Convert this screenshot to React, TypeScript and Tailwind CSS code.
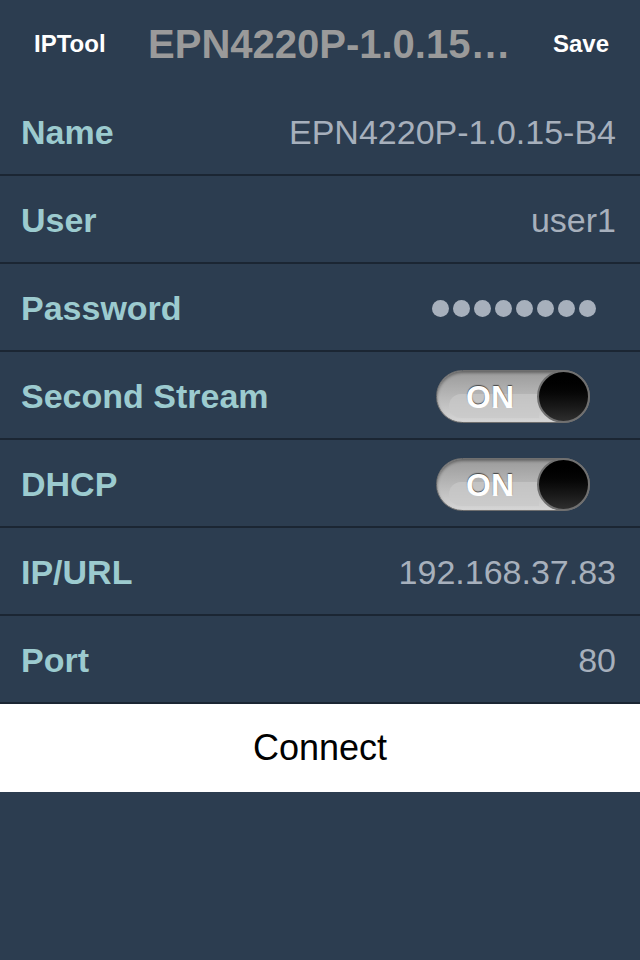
import React from "react";

const font = { fontFamily: '"Liberation Sans", Arial, Helvetica, sans-serif' };

function Toggle() {
  return (
    <div className="relative h-[53px] w-[154px] rounded-full border border-[#6f6f6f] bg-gradient-to-b from-[#9a9a9a] to-[#d6d6d6] shadow-[inset_0_2px_3px_rgba(0,0,0,0.35)]">
      <div className="absolute left-[12px] right-[50px] bottom-[4px] h-[24px] rounded-l-full bg-[#c9c9c9] opacity-70" />
      <span
        className="absolute left-[29px] top-[9px] text-[32px] font-bold leading-[34px] text-white [text-shadow:0_-1px_1px_rgba(0,0,0,0.6)]"
        style={font}
      >
        ON
      </span>
      <div className="absolute right-[-1px] top-[-1px] h-[53px] w-[53px] rounded-full border-2 border-[#707070] bg-gradient-to-b from-[#000000] to-[#2e2e2e]" />
    </div>
  );
}

function Row({ label, children }: { label: string; children: React.ReactNode }) {
  return (
    <div className="flex h-[88px] items-center justify-between border-b-2 border-[#1b2633] pl-[21px] pr-[24px] pt-[3px]">
      <span className="text-[34px] font-bold text-[#9ccbcf]" style={font}>
        {label}
      </span>
      {children}
    </div>
  );
}

function Value({ children }: { children: React.ReactNode }) {
  return (
    <span className="text-[34px] text-[#a7b0bc]" style={font}>
      {children}
    </span>
  );
}

export default function App() {
  return (
    <div className="h-[960px] w-[640px] overflow-hidden bg-[#2c3d50]" style={font}>
      <div className="flex h-[88px] items-center justify-between pl-[34px] pr-[31px]">
        <span className="text-[24px] font-bold text-white">IPTool</span>
        <span className="text-[40px] font-bold text-[#9a9a9a]">EPN4220P-1.0.15…</span>
        <span className="text-[24px] font-bold text-white">Save</span>
      </div>
      <Row label="Name">
        <Value>EPN4220P-1.0.15-B4</Value>
      </Row>
      <Row label="User">
        <Value>user1</Value>
      </Row>
      <Row label="Password">
        <div className="mr-[20px] flex gap-[4px]">
          {[0, 1, 2, 3, 4, 5, 6, 7].map((i) => (
            <div key={i} className="h-[17px] w-[17px] rounded-full bg-[#a7b0bc]" />
          ))}
        </div>
      </Row>
      <Row label="Second Stream">
        <div className="mr-[26px]">
          <Toggle />
        </div>
      </Row>
      <Row label="DHCP">
        <div className="mr-[26px]">
          <Toggle />
        </div>
      </Row>
      <Row label="IP/URL">
        <Value>192.168.37.83</Value>
      </Row>
      <Row label="Port">
        <Value>80</Value>
      </Row>
      <div className="flex h-[88px] items-center justify-center bg-white">
        <span className="text-[36px] text-black">Connect</span>
      </div>
    </div>
  );
}
